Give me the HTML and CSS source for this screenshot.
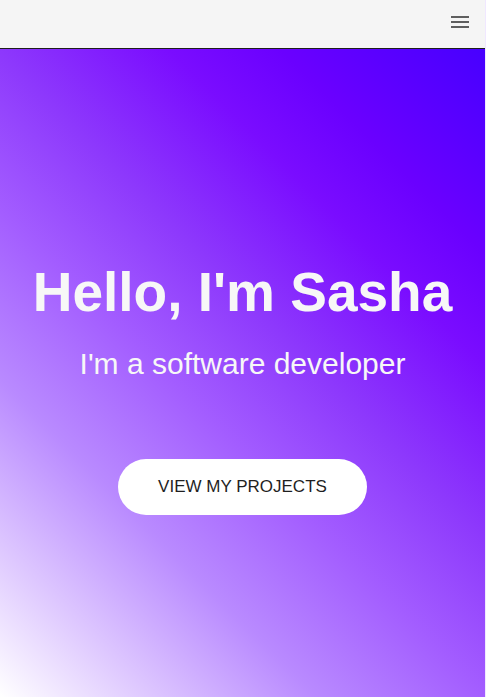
FILE: index.html
```html
<!DOCTYPE html>
<html lang="en">
<head>
<meta charset="utf-8">
<title>Sasha</title>
<link rel="stylesheet" href="styles.css">
</head>
<body>
<div class="app">
  <header class="topbar">
    <button class="menu-btn" aria-label="Menu">
      <svg width="24" height="24" viewBox="0 0 24 24"><path d="M3 6h18v2H3zM3 11h18v2H3zM3 16h18v2H3z" fill="currentColor"/></svg>
    </button>
  </header>
  <main class="hero">
    <h1 class="hero-title">Hello, I'm Sasha</h1>
    <p class="hero-sub">I'm a software developer</p>
    <a class="hero-btn" href="#">VIEW MY PROJECTS</a>
  </main>
</div>
</body>
</html>
```
FILE: styles.css
```css
* { box-sizing: border-box; }
html, body { margin: 0; padding: 0; height: 100%; }
body {
  background: #f0e8ff;
  font-family: "Liberation Sans", Arial, sans-serif;
  overflow: hidden;
}
.app {
  margin-right: 1px;
  min-height: 100vh;
  display: flex;
  flex-direction: column;
}
.topbar {
  height: 49px;
  background: #f5f5f5;
  border-bottom: 1px solid #1e1e1e;
  display: flex;
  align-items: flex-start;
  justify-content: flex-end;
  padding: 10px 13px 0 0;
}
.menu-btn {
  border: 0;
  background: none;
  padding: 0;
  width: 24px;
  height: 24px;
  color: #5f5f5f;
  display: block;
}
.menu-btn svg { display: block; }
.hero {
  flex: 1;
  display: flex;
  flex-direction: column;
  align-items: center;
  justify-content: center;
  padding-top: 28px;
  background: linear-gradient(45deg, #ffffff 0%, #b98aff 28%, #a35dff 43%, #8d38fc 57%, #7a0cff 72%, #6a00ff 82%, #4700ff 100%);
  text-align: center;
  color: #f7f7f7;
}
.hero-title {
  margin: 0;
  font-size: 55px;
  font-weight: 700;
  line-height: normal;
}
.hero-sub {
  margin: 23px 0 0;
  font-size: 30px;
  line-height: normal;
}
.hero-btn {
  margin-top: 78px;
  display: flex;
  align-items: center;
  justify-content: center;
  width: 249px;
  height: 56px;
  border-radius: 28px;
  background: #fff;
  color: #1f1f1f;
  text-decoration: none;
  font-size: 17px;
}
```
